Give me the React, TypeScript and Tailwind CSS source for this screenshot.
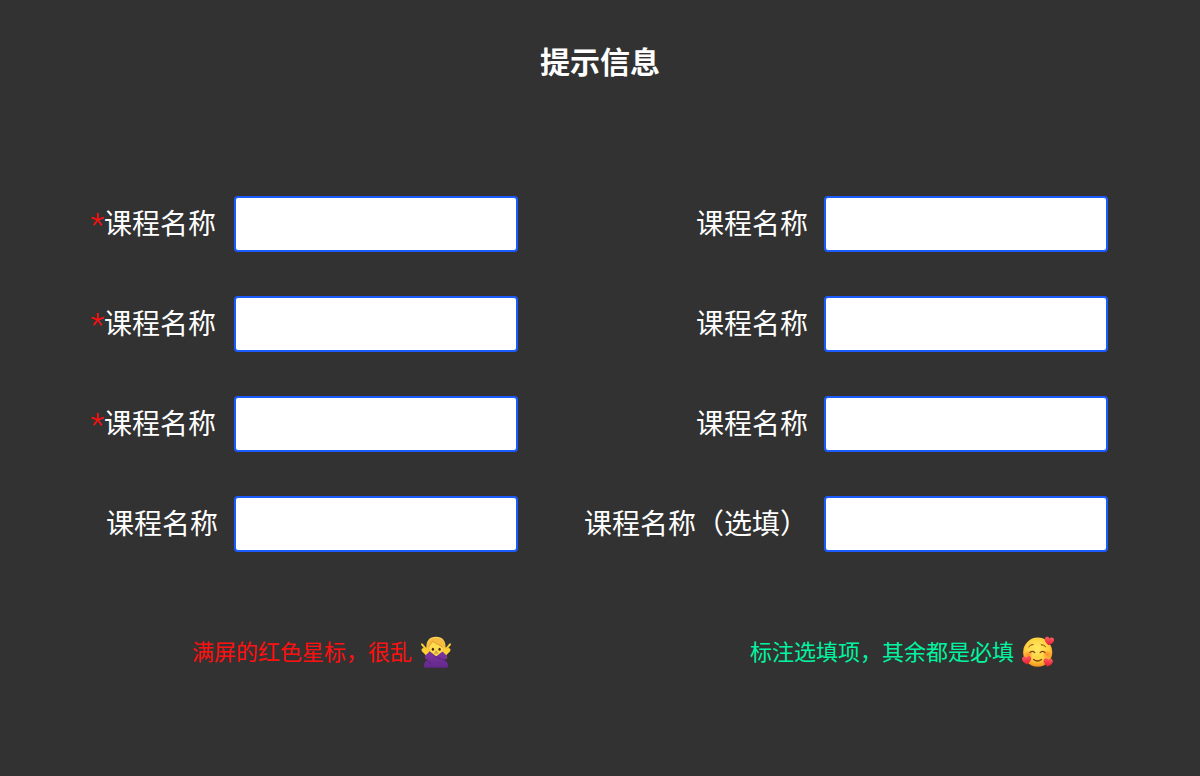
import { useId } from "react";
import clsx from "clsx";

interface Field {
  label: string;
  required?: boolean;
}

const starredFields: Field[] = [
  { label: "课程名称", required: true },
  { label: "课程名称", required: true },
  { label: "课程名称", required: true },
  { label: "课程名称" },
];

const optionalFields: Field[] = [
  { label: "课程名称" },
  { label: "课程名称" },
  { label: "课程名称" },
  { label: "课程名称（选填）" },
];

/** One label and its text box, aligned to the right of the column */
function FieldRow({ label, required }: Field) {
  const id = useId();

  return (
    <div className="flex items-center justify-end gap-4">
      <label
        htmlFor={id}
        className={clsx("flex pb-1 whitespace-nowrap text-[28px] leading-10", required && "pr-0.5")}
      >
        {required && (
          <span className="pt-1 font-['Roboto',sans-serif] text-[32px] leading-9 font-light text-[#ff1010]">*</span>
        )}
        {label}
      </label>
      <input
        id={id}
        type="text"
        required={required}
        className="h-14 w-[284px] rounded border-2 border-[#1a5cff] bg-white px-3 text-2xl text-[#323232] outline-none"
      />
    </div>
  );
}

function FieldList({ fields }: { fields: Field[] }) {
  return (
    <form className="flex flex-col gap-11">
      {fields.map((field, index) => (
        <FieldRow key={index} {...field} />
      ))}
    </form>
  );
}

/** Woman with crossed arms */
function NoGestureIcon() {
  return (
    <svg viewBox="0 0 32 32" className="size-8 shrink-0" aria-hidden="true">
      <defs>
        <linearGradient id="hair" x1="0" y1="0" x2="0" y2="1">
          <stop offset="0" stopColor="#ffd45a" />
          <stop offset="1" stopColor="#e09c22" />
        </linearGradient>
        <linearGradient id="sleeve" x1="0" y1="0" x2="0" y2="1">
          <stop offset="0" stopColor="#7d35a0" />
          <stop offset="1" stopColor="#64298c" />
        </linearGradient>
      </defs>
      <path
        d="M16 .8C9.500.8 6.400 4.800 6.400 10.500c0 4.500.1 8-1.400 11.500 2 2 5 1.500 7 .6h8.600c2.200.9 4.800.8 6.600-.8-1.600-3.400-1.500-6.800-1.600-11.300C25.600 4.800 22.500.8 16 .8z"
        fill="url(#hair)"
      />
      <path d="M5.500 31.500l2-8 5.500-3h6l5.500 3 2 8z" fill="#5b2380" />
      <ellipse cx="16.300" cy="12.800" rx="7.100" ry="7.200" fill="#ffdb52" />
      <path
        d="M7.500 16.500C6.500 9.500 9.500 8.800 12.500 4.800c3 4.400 11.300 4.500 12 11.700C26.800 7 22.500 2 16 2 9.500 2 5.400 7 7.500 16.500z"
        fill="#f7bd40"
      />
      <path d="M12.700 4.800c-.8 2-2 3.600-3.600 5M13 5.200c2 2.600 6.500 3 9.500 6" stroke="#cf8619" strokeWidth=".6" fill="none" />
      <ellipse cx="12.900" cy="13.200" rx="1.150" ry="1.500" fill="#49250b" />
      <ellipse cx="19.600" cy="13.200" rx="1.150" ry="1.500" fill="#49250b" />
      <path d="M15.400 15.200q.9.500 1.700 0M14.400 17.300q1.800-1 3.600 0" stroke="#a75d16" strokeWidth=".8" fill="none" />
      {/* Hands */}
      <g stroke="#ffcf35" strokeLinecap="round" fill="none">
        <path d="M2 8.300l5 6M30 8.300l-5 6" strokeWidth="2" />
        <path d="M3.500 14l3.500 3.500M28.500 14l-3.500 3.500" strokeWidth="4" />
        <path d="M7.500 12l.5 5M24.500 12l-.5 5" strokeWidth="2" />
      </g>
      {/* Sleeves */}
      <path
        d="M22.500 15.500l4.800 4.700c-1.200 3.400-3.200 5.800-6.500 7.800l-4.800 3.500H4.400c-.9-2-.3-4.900 1.400-6.300 2.500-2 6.800-2.300 10.200-4.600z"
        fill="url(#sleeve)"
      />
      <path
        d="M9.500 15.500l-4.800 4.700c1.200 3.400 3.200 5.800 6.500 7.800l4.800 3.500h11.600c.9-2 .3-4.900-1.400-6.300-2.500-2-6.800-2.300-10.200-4.600z"
        fill="url(#sleeve)"
      />
      <path d="M9.500 15.500l6.500 5.100c3.400 2.300 7.700 2.600 10.200 4.600M4.700 20.200c1.200 3.400 3.200 5.800 6.500 7.800" stroke="#481766" strokeWidth=".5" fill="none" />
    </svg>
  );
}

/** Smiling face with three hearts */
function HeartsFaceIcon() {
  const heart = "M0 3.900C-2.800 2-4.300.4-4.300-1.400-4.300-4-1.200-4.700 0-2.200 1.200-4.700 4.300-4 4.300-1.400 4.300.4 2.800 2 0 3.900z";

  return (
    <svg viewBox="0 0 32 32" className="size-8 shrink-0" aria-hidden="true">
      <defs>
        <radialGradient id="face" cx=".48" cy=".38" r=".64">
          <stop offset="0" stopColor="#ffea62" />
          <stop offset=".62" stopColor="#ffd03f" />
          <stop offset="1" stopColor="#ef8b16" />
        </radialGradient>
        <radialGradient id="blush">
          <stop offset="0" stopColor="#ff5a28" stopOpacity=".65" />
          <stop offset="1" stopColor="#ff6a28" stopOpacity="0" />
        </radialGradient>
        <linearGradient id="heart" x1="0" y1="0" x2="0" y2="1">
          <stop offset="0" stopColor="#ff5a5c" />
          <stop offset="1" stopColor="#e31c36" />
        </linearGradient>
      </defs>
      <circle cx="15.700" cy="16.200" r="14.600" fill="url(#face)" />
      <circle cx="6.300" cy="18.800" r="4.500" fill="url(#blush)" />
      <circle cx="25" cy="18.300" r="4.500" fill="url(#blush)" />
      <g fill="none" stroke="#7c430e" strokeLinecap="round">
        <path d="M6.800 10.700q1.600-2.300 4.300-2.200M19.200 8.700q2.800-.1 4.400 2" strokeWidth="1" />
        <path d="M8 16.600q2.300-2.400 4.800 0M18.200 16.600q2.400-2.400 4.800 0" strokeWidth="1.300" />
        <path d="M11.600 23.500q3.900 2.900 7.800 0" strokeWidth="1.400" />
      </g>
      <path d={heart} transform="translate(27.200 5.200) rotate(8) scale(1.080)" fill="url(#heart)" />
      <path d={heart} transform="translate(4.800 24.200) rotate(-6) scale(1.080)" fill="url(#heart)" />
      <path d={heart} transform="translate(26 26.500) rotate(8) scale(1.080)" fill="url(#heart)" />
    </svg>
  );
}

export default function App() {
  return (
    <main className="min-h-screen bg-[#323232] pt-10 pb-24 font-['Noto_Sans_CJK_SC',sans-serif] text-white">
      <h1 className="text-center text-3xl leading-10 font-bold">提示信息</h1>

      <div className="mt-29 grid grid-cols-2 gap-x-18 pr-[92px]">
        <FieldList fields={starredFields} />
        <FieldList fields={optionalFields} />

        {/* Verdict under each form */}
        <p className="mt-21 flex items-center justify-end gap-2 pr-[66px] text-[22px] text-[#ff1010]">
          <span className="pb-1 leading-7">满屏的红色星标，很乱</span>
          <NoGestureIcon />
        </p>
        <p className="mt-21 flex items-center justify-end gap-2 pr-[54px] text-[22px] text-[#00f5a0]">
          <span className="pb-1 leading-7">标注选填项，其余都是必填</span>
          <HeartsFaceIcon />
        </p>
      </div>
    </main>
  );
}
